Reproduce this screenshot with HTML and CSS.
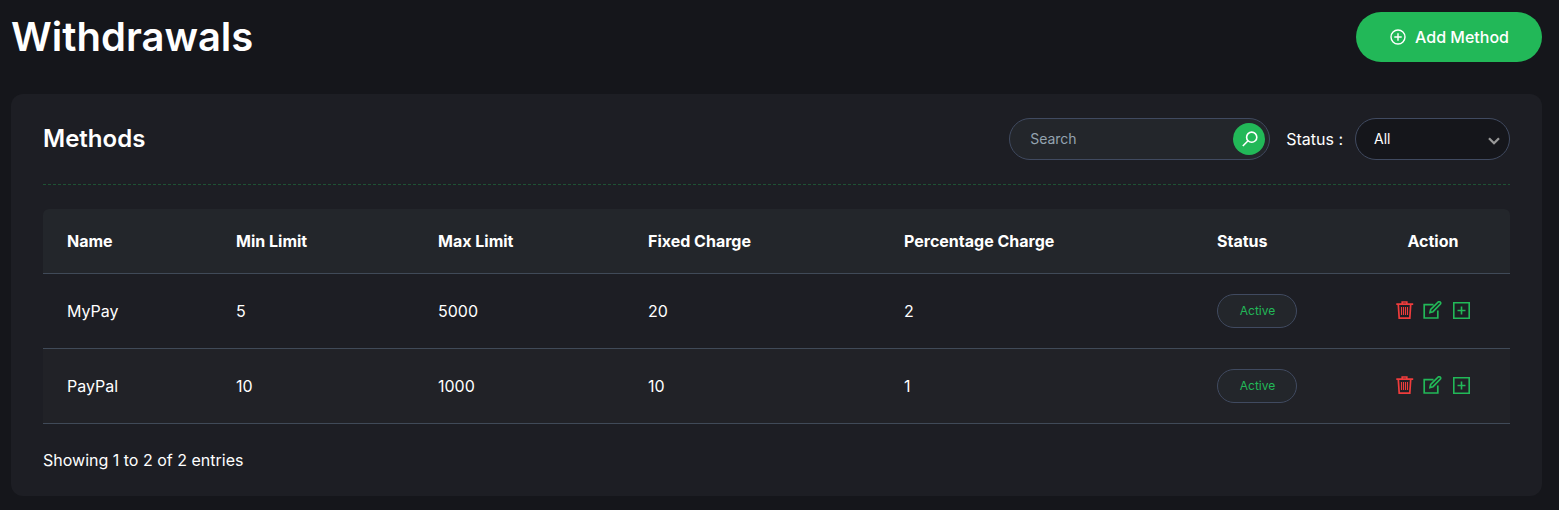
FILE: index.html
```html
<!DOCTYPE html>
<html lang="en">
<head>
<meta charset="utf-8">
<title>Withdrawals</title>
<link rel="stylesheet" href="styles.css">
</head>
<body>
<svg class="defs" aria-hidden="true">
  <symbol id="trash" viewBox="0 0 18 18"><path d="M6.200 3V1h4.600v2M.3 3.200h16.900M2.300 3.500l.9 13.600h10.600l.9-13.600" fill="none" stroke="currentColor" stroke-width="1.700"/><path d="M5.500 6v8M7.500 6v8M9.500 6v8M11.500 6v8" fill="none" stroke="currentColor" stroke-width="1.100"/></symbol>
  <symbol id="edit" viewBox="0 0 19 18"><path d="M10.500 3.600H1.200V17h13.600V9.500M7 11.500l.7-3L15.300.9q1-.6 1.900.2t.2 1.900L10 10.700z" fill="none" stroke="currentColor" stroke-width="1.700"/></symbol>
  <symbol id="plus-square" viewBox="0 0 17 17"><path d="M.8.8h15.400v15.400H.8zM8.500 4.500v8M4.500 8.500h8" fill="none" stroke="currentColor" stroke-width="1.600"/></symbol>
</svg>
<header class="page-head">
  <h1 class="page-title">Withdrawals</h1>
  <button class="add-btn">
    <svg class="add-icon" viewBox="0 0 16 16"><path d="M8 4.300v7.400M4.300 8h7.400" /><circle cx="8" cy="8" r="7"/></svg>
    <span>Add Method</span>
  </button>
</header>
<main class="card">
  <div class="card-head">
    <h2 class="card-title">Methods</h2>
    <div class="filters">
      <div class="search">
        <input class="search-input" type="text" placeholder="Search">
        <button class="search-btn" aria-label="Search"><svg class="search-icon" viewBox="0 0 16 16"><circle cx="9.700" cy="6.200" r="5.100"/><path d="M6.100 9.800.8 15"/></svg></button>
      </div>
      <span class="status-label">Status :</span>
      <div class="select"><span>All</span><svg class="chevron" viewBox="0 0 12 8"><path d="M1 1.200l5 5 5-5"/></svg></div>
    </div>
  </div>
  <table class="table">
    <colgroup><col class="c-name"><col class="c-min"><col class="c-max"><col class="c-fixed"><col class="c-pct"><col class="c-status"><col></colgroup>
    <thead>
      <tr><th>Name</th><th>Min Limit</th><th>Max Limit</th><th>Fixed Charge</th><th>Percentage Charge</th><th>Status</th><th class="center">Action</th></tr>
    </thead>
    <tbody>
      <tr><td>MyPay</td><td>5</td><td>5000</td><td>20</td><td>2</td><td><span class="badge">Active</span></td>
        <td><div class="actions"><svg class="i-trash"><use href="#trash"/></svg><svg class="i-edit"><use href="#edit"/></svg><svg class="i-plus"><use href="#plus-square"/></svg></div></td></tr>
      <tr><td>PayPal</td><td>10</td><td>1000</td><td>10</td><td>1</td><td><span class="badge">Active</span></td>
        <td><div class="actions"><svg class="i-trash"><use href="#trash"/></svg><svg class="i-edit"><use href="#edit"/></svg><svg class="i-plus"><use href="#plus-square"/></svg></div></td></tr>
    </tbody>
  </table>
  <p class="summary">Showing 1 to 2 of 2 entries</p>
</main>
</body>
</html>
```
FILE: styles.css
```css
* { box-sizing: border-box; }
body {
  margin: 0;
  padding: 12px 17px 14px 11px;
  background: #15161b;
  color: #fff;
  font: 400 16px/24px Inter, "Liberation Sans", sans-serif;
  overflow: hidden;
}
h1, h2, p { margin: 0; }
button { border: 0; padding: 0; color: #fff; font: inherit; }
.defs { display: none; }
.page-head { display: flex; justify-content: space-between; align-items: center; height: 50px; margin-bottom: 32px; }
.page-title { font-size: 40px; line-height: 50px; font-weight: 600; }
.add-btn {
  display: flex; align-items: center; justify-content: center; gap: 9px;
  width: 186px; height: 50px; padding-left: 1px; border-radius: 25px;
  background: #22b858; font-weight: 500;
}
.add-icon { width: 16px; height: 16px; fill: none; stroke: #fff; stroke-width: 1.4; }
.card { height: 402px; padding: 24px 32px; border-radius: 12px; background: #1d1e24; }
.card-head {
  display: flex; justify-content: space-between; height: 67px; margin-bottom: 24px;
  background: repeating-linear-gradient(90deg, #1e5234 0 3px, transparent 3px 5px) bottom / 100% 1px no-repeat;
}
.card-title { font-size: 24px; line-height: 41px; font-weight: 600; }
.filters { display: flex; align-items: center; height: 42px; }
.search {
  display: flex; align-items: center; width: 261px; height: 42px; padding: 0 4px 0 20px;
  border: 1px solid #404a60; border-radius: 21px; background: #23262b;
}
.search-input { flex: 1; min-width: 0; border: 0; padding: 0; background: none; color: #fff; font: 14px/20px Inter, sans-serif; }
.search-input::placeholder { color: #94a3b0; }
.search-btn { display: flex; align-items: center; justify-content: center; width: 32px; height: 32px; padding-left: 2px; border-radius: 50%; background: #22b858; }
.search-icon { width: 16px; height: 16px; fill: none; stroke: #fff; stroke-width: 1.6; }
.status-label { margin: 0 12px 0 16px; }
.select {
  display: flex; align-items: center; justify-content: space-between; width: 155px; height: 42px; padding: 0 9px 0 18px;
  border: 1px solid #404a60; border-radius: 21px; background: #15161b; font-size: 14px;
}
.chevron { width: 12px; height: 8px; margin-top: 3px; fill: none; stroke: #999; stroke-width: 2.3; }
.table { width: 100%; table-layout: fixed; border-collapse: separate; border-spacing: 0; }
.c-name { width: 169px; }
.c-min { width: 202px; }
.c-max { width: 210px; }
.c-fixed { width: 256px; }
.c-pct { width: 313px; }
.c-status { width: 163px; }
.table th, .table td { padding: 0 24px; text-align: left; border-bottom: 1px solid #404a58; white-space: nowrap; }
.table th { height: 65px; background: #23262b; font-weight: 700; }
.table th:first-child { border-top-left-radius: 6px; }
.table th:last-child { border-top-right-radius: 6px; }
.table td { height: 75px; }
.table tbody tr:nth-child(even) td { background: #212227; }
.table .center { text-align: center; }
.badge {
  display: flex; align-items: center; justify-content: center; width: 80px; height: 34px; padding-left: 1px;
  border: 1px solid #404a60; border-radius: 17px; background: #23262b; color: #22b858; font-size: 12px;
}
.actions { display: flex; align-items: center; justify-content: center; height: 18px; margin-top: -2px; color: #22b858; }
.i-trash { width: 18px; height: 18px; margin-right: 9px; color: #ef3c3c; }
.i-edit { width: 19px; height: 18px; margin-right: 11px; }
.i-plus { width: 17px; height: 17px; }
.summary { padding-top: 24px; }
```
